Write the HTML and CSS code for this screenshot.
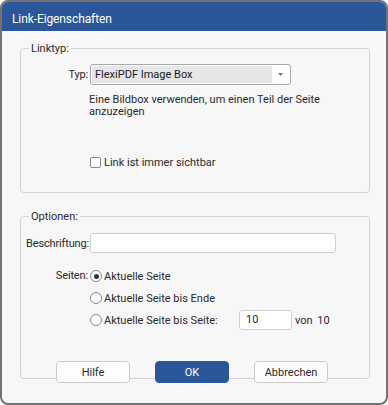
FILE: index.html
```html
<!DOCTYPE html>
<html lang="de">
<head>
  <meta charset="UTF-8" />
  <title>Link-Eigenschaften</title>
  <link rel="stylesheet" href="styles.css">
</head>
<body>
  <div class="dialog">
    <div class="titlebar">Link-Eigenschaften</div>
    <div class="content">
      <fieldset class="group group-type">
        <legend>Linktyp:</legend>
        <div class="row">
          <span class="lbl">Typ:</span>
          <div class="select">
            <span class="select-value">FlexiPDF Image Box</span>
            <span class="select-arrow">
              <svg width="5" height="3" viewBox="0 0 5 3"><path d="M0 0h5L2.5 3z" fill="#707070"/></svg>
            </span>
          </div>
        </div>
        <p class="hint">Eine Bildbox verwenden, um einen Teil der Seite<br>anzuzeigen</p>
        <div class="check"><span class="box"></span>Link ist immer sichtbar</div>
      </fieldset>

      <fieldset class="group group-options">
        <legend>Optionen:</legend>
        <div class="row">
          <span class="lbl">Beschriftung:</span>
          <div class="input input-wide"></div>
        </div>
        <div class="pages">
          <span class="lbl">Seiten:</span>
          <div class="radios">
            <div class="radio-row"><span class="radio on"></span>Aktuelle Seite</div>
            <div class="radio-row"><span class="radio"></span>Aktuelle Seite bis Ende</div>
            <div class="radio-row">
              <span class="radio"></span><span class="radio-text">Aktuelle Seite bis Seite:</span>
              <div class="input input-small">10</div>
              <span class="of">von 10</span>
            </div>
          </div>
        </div>
      </fieldset>

      <div class="buttons">
        <button class="btn">Hilfe</button>
        <button class="btn btn-primary">OK</button>
        <button class="btn">Abbrechen</button>
      </div>
    </div>
  </div>
</body>
</html>
```

FILE: styles.css
```css
html, body {
  margin: 0;
  padding: 0;
  background: #ffffff;
  font-family: Roboto, 'Noto Sans', sans-serif;
  font-size: 11px;
  color: #2a2a2a;
}
.dialog {
  box-sizing: border-box;
  width: 388px;
  height: 405px;
  border: 2px solid #727272;
  border-radius: 8px;
  background: #f7f7f7;
  overflow: hidden;
  display: flex;
  flex-direction: column;
}
.titlebar {
  box-sizing: border-box;
  height: 29px;
  padding: 9px 10px 0;
  background: #2b579a;
  color: #ffffff;
  font-size: 12px;
  line-height: 16px;
  letter-spacing: -0.1px;
}
.content {
  padding: 9px 16px 0 18px;
  display: flex;
  flex-direction: column;
}
.group {
  margin: 0;
  min-width: 0;
  border: 1px solid #d3d3d3;
  border-radius: 4px;
  padding: 0 5px;
}
.group legend {
  padding: 0 2px;
  margin-left: 3px;
  line-height: 17px;
}
.group-type {
  padding-top: 7px;
  padding-bottom: 22px;
}
.group-options {
  margin-top: 15px;
  padding-top: 8px;
  padding-bottom: 47px;
}
.row {
  display: flex;
  align-items: center;
}
.lbl {
  width: 62px;
  margin-right: 2px;
  text-align: right;
  flex-shrink: 0;
  letter-spacing: -0.15px;
  white-space: nowrap;
}
.select {
  box-sizing: border-box;
  width: 201px;
  height: 21px;
  border: 1px solid #a8a8a8;
  border-radius: 3px;
  background: #ffffff;
  padding: 1px;
  display: flex;
}
.select-value {
  flex: 1;
  background: #e6e6e6;
  padding-left: 3px;
  line-height: 17px;
  color: #1a1a1a;
}
.select-arrow {
  width: 17px;
  display: flex;
  align-items: center;
  justify-content: center;
}
.hint {
  margin: 9px 0 0 63px;
  line-height: 12px;
}
.check {
  margin: 37px 0 0 64px;
  height: 15px;
  display: flex;
  align-items: center;
}
.box {
  box-sizing: border-box;
  width: 11px;
  height: 11px;
  border: 1px solid #8a8a8a;
  border-radius: 2px;
  background: #ffffff;
  margin-right: 3px;
}
.input {
  box-sizing: border-box;
  height: 20px;
  border: 1px solid #cfcfcf;
  border-radius: 3px;
  background: #ffffff;
}
.input-wide {
  width: 246px;
}
.input-small {
  width: 53px;
  padding-left: 6px;
  line-height: 18px;
}
.pages {
  margin-top: 12px;
  display: flex;
  align-items: flex-start;
}
.pages .lbl {
  line-height: 22px;
}
.radio-row {
  height: 22px;
  display: flex;
  align-items: center;
}
.radio {
  box-sizing: border-box;
  width: 12px;
  height: 12px;
  border: 1px solid #8a8a8a;
  border-radius: 50%;
  background: #ffffff;
  margin-right: 2px;
  display: flex;
  align-items: center;
  justify-content: center;
}
.radio.on::after {
  content: "";
  width: 5px;
  height: 5px;
  border-radius: 50%;
  background: #333333;
}
.radio-text {
  width: 135px;
}
.of {
  margin-left: 3px;
  word-spacing: 2px;
}
.buttons {
  margin-top: -18px;
  padding-left: 36px;
  display: flex;
  gap: 25px;
}
.btn {
  box-sizing: border-box;
  width: 74px;
  height: 22px;
  border: 1px solid #cccccc;
  border-radius: 4px;
  background: #fdfdfd;
  font-family: Roboto, 'Noto Sans', sans-serif;
  font-size: 11px;
  color: #2a2a2a;
  padding: 0;
}
.btn-primary {
  background: #2b579a;
  border-color: #2b579a;
  color: #ffffff;
}
```
